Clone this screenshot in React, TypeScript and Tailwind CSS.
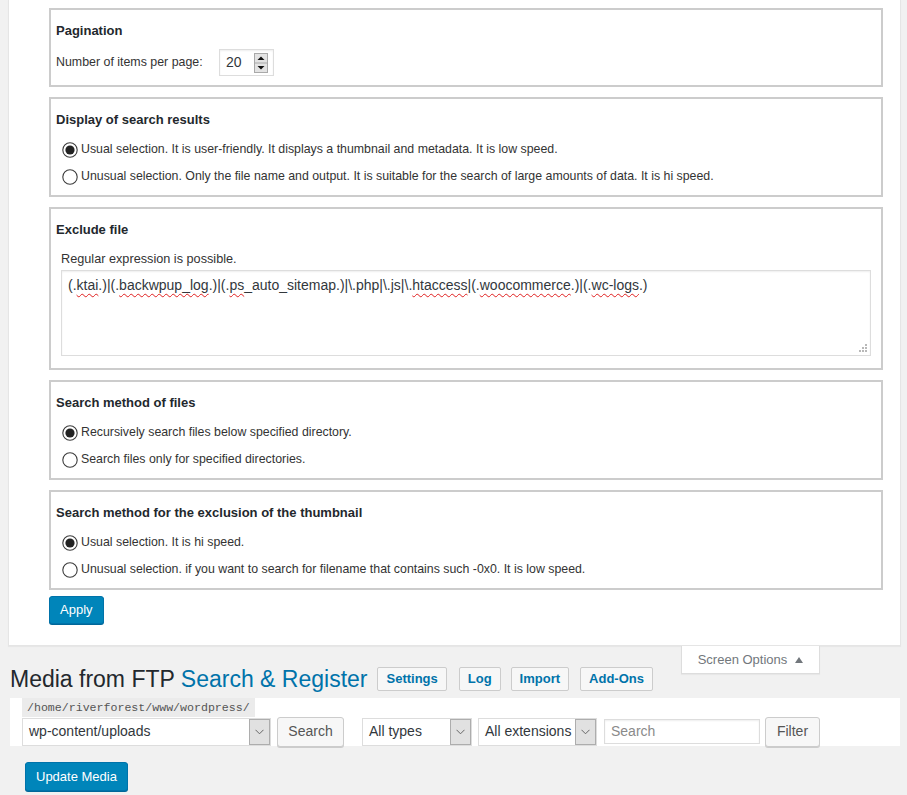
import React from "react";

const font = { fontFamily: '"Liberation Sans", Arial, sans-serif' };

function Radio({ checked }: { checked?: boolean }) {
  return (
    <svg width="16" height="16" viewBox="0 0 16 16" className="shrink-0">
      <circle cx="8" cy="8" r="7.2" fill="#fff" stroke="#3c3c3c" strokeWidth="1.1" />
      {checked && <circle cx="8" cy="8" r="4.6" fill="#222" />}
    </svg>
  );
}

function RadioRow({ checked, label }: { checked?: boolean; label: string }) {
  return (
    <label className="flex h-[27px] items-center gap-[3px] pl-[6px] text-[12.35px] text-[#333]">
      <Radio checked={checked} />
      <span>{label}</span>
    </label>
  );
}

function Box({ title, children }: { title: string; children: React.ReactNode }) {
  return (
    <div className="border-2 border-[#ccc] bg-white px-[5px] pt-[12px]">
      <h3 className="text-[13px] leading-[18px] font-bold text-[#23282d]">{title}</h3>
      {children}
    </div>
  );
}

function Chevron() {
  return (
    <svg width="9" height="6" viewBox="0 0 9 6">
      <path d="M0.5 0.8 L4.5 4.8 L8.5 0.8" fill="none" stroke="#666" strokeWidth="1" />
    </svg>
  );
}

function Select({ value, width }: { value: string; width: string }) {
  return (
    <div className={`flex h-[28px] items-stretch border border-[#ddd] bg-white ${width}`}>
      <span className="flex flex-1 items-center overflow-hidden pl-[6px] text-[14px] whitespace-nowrap text-[#32373c]">
        {value}
      </span>
      <span className="flex w-[21px] items-center justify-center border border-[#adadad] bg-[#e1e1e1]">
        <Chevron />
      </span>
    </div>
  );
}

function Squiggle({ children }: { children: React.ReactNode }) {
  return (
    <span className="underline decoration-[#e02020] decoration-wavy decoration-1 underline-offset-[3px]">
      {children}
    </span>
  );
}

export default function App() {
  return (
    <div className="min-h-screen w-full bg-[#f1f1f1]" style={font}>
      {/* Settings panel */}
      <div className="ml-[8px] w-[893px] border-x border-b border-[#e5e5e5] bg-white pt-[8px] pr-[17px] pb-[21px] pl-[40px] shadow-[0_1px_1px_rgba(0,0,0,0.04)]">
        <div className="flex flex-col gap-[10px]">
          <Box title="Pagination">
            <div className="mt-[9px] mb-[9px] flex h-[27px] items-center">
              <span className="w-[163px] text-[12.4px] text-[#333]">Number of items per page:</span>
              <div className="relative flex h-[27px] w-[55px] items-center border border-[#ddd] pl-[6px] text-[14px] text-[#32373c] shadow-[inset_0_1px_2px_rgba(0,0,0,0.07)]">
                20
                <svg width="14" height="20" viewBox="0 0 14 20" className="absolute top-[3px] right-[5px]">
                  <rect x="0.5" y="0.5" width="13" height="19" fill="#e3e3e3" stroke="#a9a9a9" />
                  <line x1="0.5" y1="10" x2="13.5" y2="10" stroke="#a9a9a9" />
                  <path d="M3.5 7 L7 3.5 L10.5 7 Z" fill="#111" />
                  <path d="M3.5 13 L7 16.5 L10.5 13 Z" fill="#111" />
                </svg>
              </div>
            </div>
          </Box>

          <Box title="Display of search results">
            <div className="mt-[7px] pb-[5px]">
              <RadioRow checked label="Usual selection. It is user-friendly. It displays a thumbnail and metadata. It is low speed." />
              <RadioRow label="Unusual selection. Only the file name and output. It is suitable for the search of large amounts of data. It is hi speed." />
            </div>
          </Box>

          <Box title="Exclude file">
            <div className="px-[5px] pb-[12px]">
              <p className="mt-[12px] text-[12.7px] leading-[16px] text-[#333]">Regular expression is possible.</p>
              <div className="relative mt-[3px] h-[86px] border border-[#ddd] px-[6px] pt-[4px] text-[14px] leading-[20px] text-[#32373c] shadow-[inset_0_1px_2px_rgba(0,0,0,0.07)]">
                (.<Squiggle>ktai</Squiggle>.)|(.<Squiggle>backwpup_log</Squiggle>.)|(.<Squiggle>ps</Squiggle>_auto_sitemap.)|\.php|\.js|\.<Squiggle>htaccess</Squiggle>|(.<Squiggle>woocommerce</Squiggle>.)|(.<Squiggle>wc-logs</Squiggle>.)
                <svg width="10" height="10" viewBox="0 0 10 10" className="absolute right-[2px] bottom-[2px]">
                  <rect x="7" y="1" width="2" height="2" fill="#b8b8b8" />
                  <rect x="4" y="4" width="2" height="2" fill="#b8b8b8" />
                  <rect x="7" y="4" width="2" height="2" fill="#b8b8b8" />
                  <rect x="1" y="7" width="2" height="2" fill="#b8b8b8" />
                  <rect x="4" y="7" width="2" height="2" fill="#b8b8b8" />
                  <rect x="7" y="7" width="2" height="2" fill="#b8b8b8" />
                </svg>
              </div>
            </div>
          </Box>

          <Box title="Search method of files">
            <div className="mt-[7px] pb-[5px]">
              <RadioRow checked label="Recursively search files below specified directory." />
              <RadioRow label="Search files only for specified directories." />
            </div>
          </Box>

          <Box title="Search method for the exclusion of the thumbnail">
            <div className="mt-[7px] pb-[5px]">
              <RadioRow checked label="Usual selection. It is hi speed." />
              <RadioRow label="Unusual selection. if you want to search for filename that contains such -0x0. It is low speed." />
            </div>
          </Box>
        </div>

        <button className="mt-[6px] h-[28px] rounded-[3px] border border-[#0073aa] bg-[#0085ba] px-[10px] text-[13px] text-white shadow-[0_1px_0_#006799]">
          Apply
        </button>
      </div>

      {/* Plugin page */}
      <div className="relative px-[10px] pt-[18px]">
        <div className="absolute top-0 left-[681px] flex h-[28px] w-[139px] items-center justify-center gap-[8px] border-x border-b border-[#ddd] bg-white text-[13px] text-[#72777c] shadow-[0_1px_1px_rgba(0,0,0,0.04)]">
          <span>Screen Options</span>
          <svg width="8" height="6" viewBox="0 0 8 6">
            <path d="M0 6 L4 0 L8 6 Z" fill="#72777c" />
          </svg>
        </div>

        <div className="flex h-[30px] items-center">
          <h1 className="text-[23px] leading-[29px] text-[#23282d]">
            Media from FTP <span className="text-[#0073aa]">Search &amp; Register</span>
          </h1>
          <div className="ml-[10px] flex items-center">
            {[
              ["Settings", "ml-0"],
              ["Log", "ml-[12px]"],
              ["Import", "ml-[10px]"],
              ["Add-Ons", "ml-[11px]"],
            ].map(([t, m]) => (
              <span
                key={t}
                className={`${m} flex h-[24px] items-center rounded-[2px] border border-[#ccc] bg-[#f7f7f7] px-[8px] text-[13px] font-bold text-[#0073aa]`}
              >
                {t}
              </span>
            ))}
          </div>
        </div>

        <div className="mt-[4px] w-[890px] bg-white pl-[12px]">
          <div
            className="block h-[19px] w-fit bg-[#ebebeb] px-[5px] text-[11.6px] leading-[19px] text-[#555]"
            style={{ fontFamily: '"Liberation Mono", monospace' }}
          >
            /home/riverforest/www/wordpress/
          </div>
          <div className="flex h-[29px] items-center">
            <Select value="wp-content/uploads" width="w-[249px]" />
            <button className="ml-[6px] h-[30px] w-[67px] rounded-[3px] border border-[#ccc] bg-[#f7f7f7] text-[14px] text-[#555] shadow-[0_1px_0_#ccc]">
              Search
            </button>
            <div className="ml-[18px]">
              <Select value="All types" width="w-[110px]" />
            </div>
            <div className="ml-[6px]">
              <Select value="All extensions" width="w-[119px]" />
            </div>
            <div className="ml-[7px] flex h-[25px] w-[156px] items-center border border-[#ddd] pl-[6px] text-[14px] text-[#8a8a8a] shadow-[inset_0_1px_2px_rgba(0,0,0,0.07)]">
              Search
            </div>
            <button className="ml-[5px] h-[30px] w-[55px] rounded-[3px] border border-[#ccc] bg-[#f7f7f7] text-[14px] text-[#555] shadow-[0_1px_0_#ccc]">
              Filter
            </button>
          </div>
        </div>

        <button className="mt-[16px] ml-[15px] h-[29px] rounded-[3px] border border-[#0073aa] bg-[#0085ba] px-[10px] text-[13px] text-white shadow-[0_1px_0_#006799]">
          Update Media
        </button>
      </div>
    </div>
  );
}
